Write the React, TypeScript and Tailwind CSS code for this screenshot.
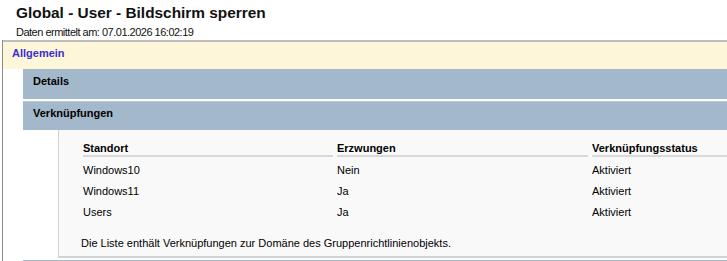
const rows = [
  { ort: "Windows10", erz: "Nein", status: "Aktiviert" },
  { ort: "Windows11", erz: "Ja", status: "Aktiviert" },
  { ort: "Users", erz: "Ja", status: "Aktiviert" },
];

export default function App() {
  return (
    <div className="w-[727px] h-[261px] overflow-hidden bg-white text-black font-['Liberation_Sans',Arial,sans-serif]">
      {/* Header */}
      <div className="pl-4 pt-[4px] h-[40px]">
        <div className="text-[15.4px] font-bold leading-[18px] text-[#111]">
          Global - User - Bildschirm sperren
        </div>
        <div className="text-[11px] tracking-[-0.5px] leading-[14px] mt-[3px] text-[#111]">
          Daten ermittelt am: 07.01.2026 16:02:19
        </div>
      </div>

      <div className="ml-[2px] border-l border-[#8c8c8c]">
        {/* Allgemein */}
        <div className="h-[29px] bg-[#fdf6d8] border-t-2 border-[#bdbdbd] pl-[9px] pt-[4px] text-[11px] leading-[14px]">
          <span className="font-bold text-[#3a2fd0]">Allgemein</span>
        </div>

        <div className="pl-5">
          <div className="h-[30px] bg-[#a3b8cb] pl-[10px] pt-[5px] text-[11px] font-bold leading-[14px]">
            Details
          </div>
          <div className="h-[29px] mt-[2px] bg-[#a3b8cb] border-t border-[#b6c7d6] pl-[10px] pt-[4px] text-[11px] font-bold leading-[14px]">
            Verknüpfungen
          </div>

          <div className="pl-[35px]">
            <div className="h-[128px] bg-[#f9f9f9] border-l border-b-2 border-[#d2d2d2] pl-[24px] pt-[11px] text-[11px]">
              <div className="flex">
                <div className="w-[250px] mr-[4px] h-[16px] leading-[15px] font-bold border-b-2 border-[#d8d8d8]">Standort</div>
                <div className="w-[251px] mr-[4px] h-[16px] leading-[15px] font-bold border-b-2 border-[#d8d8d8]">Erzwungen</div>
                <div className="flex-1 h-[16px] leading-[15px] font-bold border-b-2 border-[#d8d8d8]">Verknüpfungsstatus</div>
              </div>
              <div className="pt-[3px]">
                {rows.map((r) => (
                  <div key={r.ort} className="flex h-[21px] items-center">
                    <div className="w-[254px]">{r.ort}</div>
                    <div className="w-[255px]">{r.erz}</div>
                    <div className="flex-1">{r.status}</div>
                  </div>
                ))}
              </div>
              <div className="mt-[13px] -ml-[2px] leading-[14px]">
                Die Liste enthält Verknüpfungen zur Domäne des Gruppenrichtlinienobjekts.
              </div>
            </div>
          </div>
          <div className="h-[4px] mt-[2px] bg-[#a3b8cb]" />
        </div>
      </div>
    </div>
  );
}
